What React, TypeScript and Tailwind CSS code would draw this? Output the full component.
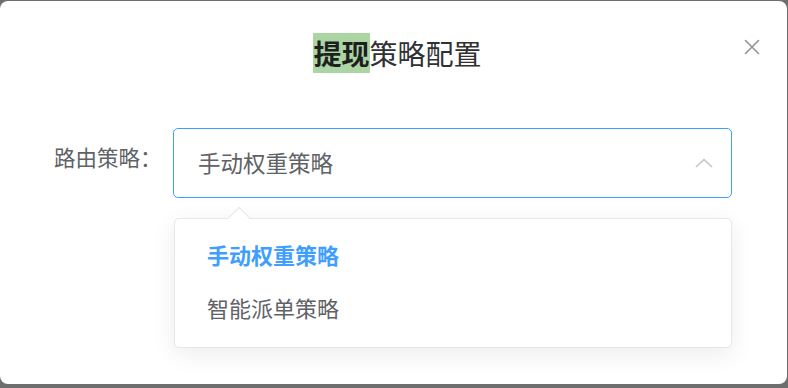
import React from 'react';

const font = '"Noto Sans CJK SC", "Noto Sans", sans-serif';

function CloseIcon() {
  return (
    <svg width="16" height="16" viewBox="0 0 16 16" fill="none" stroke="#909399" strokeWidth="1.6" strokeLinecap="round">
      <path d="M1.5 1.5 L14.5 14.5 M14.5 1.5 L1.5 14.5" />
    </svg>
  );
}

function ChevronUp() {
  return (
    <svg width="18" height="10" viewBox="0 0 18 10" fill="none" stroke="#c0c4cc" strokeWidth="1.6">
      <path d="M1 9 L9 1.5 L17 9" />
    </svg>
  );
}

export default function App() {
  const options = ['手动权重策略', '智能派单策略'];
  const selected = '手动权重策略';

  return (
    <div className="w-[788px] h-[388px] bg-[#6e6e6e] overflow-hidden" style={{ fontFamily: font }}>
      <div className="relative mt-px w-[787px] h-[383px] bg-white rounded-lg">
        {/* header */}
        <div className="h-[104px] pl-[8px] flex items-center justify-center">
          <h2 className="text-[28px] leading-[28px] text-[#303133]">
            <span className="bg-[#abd6a4] font-bold text-[#1f1f1f]">提现</span>策略配置
          </h2>
        </div>
        <button className="absolute top-[38px] left-[744px] p-0">
          <CloseIcon />
        </button>

        {/* body */}
        <div className="mt-[23px] flex">
          <label className="ml-[54px] w-[119px] pt-[14px] text-[21.5px] leading-[30px] text-[#606266]">
            路由策略：
          </label>
          <div className="relative w-[559px]">
            <div className="h-[70px] border border-[#409eff] rounded-[5px] flex items-center justify-between pl-[24px] pr-[18px]">
              <span className="text-[22.5px] text-[#606266]">{selected}</span>
              <ChevronUp />
            </div>

            {/* dropdown */}
            <div className="absolute left-px top-[90px] w-[558px] bg-white border border-[#e4e7ed] rounded-[5px] shadow-[0_6px_24px_rgba(0,0,0,0.08)] pt-[9px] pb-[13px]">
              <div className="absolute -top-[9px] left-[56px] w-[16px] h-[16px] bg-white border-l border-t border-[#e4e7ed] rotate-45" />
              {options.map((o) => (
                <div
                  key={o}
                  className={
                    o === selected
                      ? 'relative h-[53px] flex items-center pl-[32px] text-[22px] font-bold text-[#409eff]'
                      : 'relative h-[53px] flex items-center pl-[32px] text-[22px] text-[#606266]'
                  }
                >
                  {o}
                </div>
              ))}
            </div>
          </div>
        </div>
      </div>
    </div>
  );
}
